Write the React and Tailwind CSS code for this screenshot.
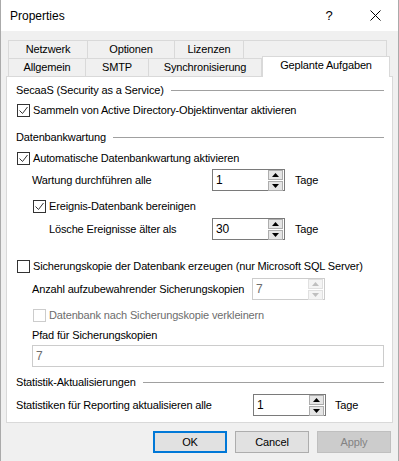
import React from 'react';

const font = { fontFamily: '"Liberation Sans", Arial, sans-serif' };

// Small checkbox in the Windows 10 style
const Check = ({ checked, disabled }) => (
  <span
    className={`flex h-[13px] w-[13px] shrink-0 items-center justify-center border bg-white ${
      disabled ? 'border-[#cccccc]' : 'border-[#333333]'
    }`}
  >
    {checked && (
      <svg width="11" height="11" viewBox="0 0 11 11" fill="none">
        <path d="M1.5 5.5l3 3 5-6.5" stroke="#333333" strokeWidth="1" />
      </svg>
    )}
  </span>
);

const GroupHeader = ({ title, className = '' }) => (
  <div className={`flex h-5 items-center pr-[8px] ${className}`}>
    <span className="whitespace-nowrap">{title}</span>
    <span className="ml-[7px] h-px flex-1 bg-[#a0a0a0]" />
  </div>
);

const SpinArrow = ({ up, disabled }) => (
  <span
    className={`flex h-[10px] w-[15px] items-center justify-center border ${
      disabled ? 'border-[#e0e0e0] bg-[#f4f4f4]' : 'border-[#adadad] bg-[#e5e5e5]'
    }`}
  >
    <svg width="7" height="4" viewBox="0 0 7 4">
      <path d={up ? 'M0 4L3.5 0L7 4z' : 'M0 0L3.5 4L7 0z'} fill={disabled ? '#bfbfbf' : '#000000'} />
    </svg>
  </span>
);

const Spin = ({ value, disabled, className = '' }) => (
  <div
    className={`flex h-[22px] w-[73px] shrink-0 items-center border bg-white ${
      disabled ? 'border-[#cccccc] text-[#6d6d6d]' : 'border-[#7a7a7a] text-black'
    } ${className}`}
  >
    <span className="flex-1 pl-[3px] text-[12px]">{value}</span>
    <span className="mr-[1px] flex flex-col gap-px">
      <SpinArrow up disabled={disabled} />
      <SpinArrow disabled={disabled} />
    </span>
  </div>
);

const Tab = ({ label, className = '' }) => (
  <div
    className={`flex items-center justify-center border border-b-0 border-[#d9d9d9] bg-[#f0f0f0] ${className}`}
  >
    {label}
  </div>
);

export default function App() {
  return (
    <div
      className="h-[461px] w-[399px] overflow-hidden whitespace-nowrap border-x border-[#aaaaaa] bg-[#f0f0f0] text-[11px] leading-none tracking-[-0.15px] text-black"
      style={font}
    >
      {/* Title bar */}
      <div className="flex h-[31px] items-center bg-white pl-[9px] text-[12px] tracking-normal">
        <span className="flex-1">Properties</span>
        <span className="w-[46px] text-center text-[13px]">?</span>
        <span className="flex w-[46px] items-center justify-center">
          <svg width="11" height="11" viewBox="0 0 11 11">
            <path d="M0.5 0.5l10 10M10.5 0.5l-10 10" stroke="#000" strokeWidth="1" />
          </svg>
        </span>
      </div>

      {/* Tabs */}
      <div className="relative mt-[9px] pl-[7px]">
        <div className="flex h-[18px]">
          <Tab label="Netzwerk" className="w-[80px]" />
          <Tab label="Optionen" className="w-[87px] border-l-0" />
          <Tab label="Lizenzen" className="w-[69px] border-l-0" />
          <Tab label="" className="w-[143px] border-l-0" />
        </div>
        <div className="flex h-[18px]">
          <Tab label="Allgemein" className="w-[78px]" />
          <Tab label="SMTP" className="w-[63px] border-l-0" />
          <Tab label="Synchronisierung" className="w-[113px] border-l-0" />
          <div className="relative z-10 -mt-[2px] flex h-[21px] w-[128px] items-center justify-center border border-b-0 border-[#d9d9d9] bg-white pb-[3px]">
            Geplante Aufgaben
          </div>
        </div>
      </div>

      {/* Tab panel */}
      <div className="mx-[5px] flex h-[347px] flex-col border border-[#d9d9d9] bg-white pl-[9px] pt-[3px]">
        <GroupHeader title="SecaaS (Security as a Service)" />
        <label className="flex h-5 items-center gap-[3px] pl-px">
          <Check checked />
          <span>Sammeln von Active Directory-Objektinventar aktivieren</span>
        </label>

        <GroupHeader title="Datenbankwartung" className="mt-[7px]" />
        <label className="mt-px flex h-5 items-center gap-[3px] pl-px">
          <Check checked />
          <span>Automatische Datenbankwartung aktivieren</span>
        </label>
        <div className="mt-px flex h-[22px] items-center pl-[16px]">
          <span className="w-[180px]">Wartung durchführen alle</span>
          <Spin value="1" />
          <span className="ml-[10px]">Tage</span>
        </div>
        <label className="mt-[5px] flex h-5 items-center gap-[3px] pl-[17px]">
          <Check checked />
          <span>Ereignis-Datenbank bereinigen</span>
        </label>
        <div className="mt-[2px] flex h-[22px] items-center pl-[33px]">
          <span className="w-[163px]">Lösche Ereignisse älter als</span>
          <Spin value="30" />
          <span className="ml-[10px]">Tage</span>
        </div>

        <label className="mt-[16px] flex h-5 items-center gap-[3px] pl-px">
          <Check />
          <span>Sicherungskopie der Datenbank erzeugen (nur Microsoft SQL Server)</span>
        </label>
        <div className="mt-[2px] flex h-[22px] items-center pl-[16px]">
          <span className="w-[220px]">Anzahl aufzubewahrender Sicherungskopien</span>
          <Spin value="7" disabled />
        </div>
        <label className="mt-[5px] flex h-5 items-center gap-[3px] pl-[17px] text-[#6d6d6d]">
          <Check disabled />
          <span>Datenbank nach Sicherungskopie verkleinern</span>
        </label>
        <div className="mt-px flex h-[18px] items-center pl-[16px]">Pfad für Sicherungskopien</div>
        <div className="ml-[16px] mr-[8px] mt-px flex h-[22px] items-center border border-[#cccccc] pl-[3px] text-[12px] text-[#6d6d6d]">
          7
        </div>

        <GroupHeader title="Statistik-Aktualisierungen" className="mt-[5px]" />
        <div className="mt-[2px] flex h-[22px] items-center">
          <span className="w-[237px]">Statistiken für Reporting aktualisieren alle</span>
          <Spin value="1" />
          <span className="ml-[9px]">Tage</span>
        </div>
      </div>

      {/* Buttons */}
      <div className="mt-[8px] flex justify-end gap-[8px] pr-[7px]">
        <button className="h-[22px] w-[74px] border-2 border-[#0078d7] bg-[#e1e1e1]">OK</button>
        <button className="h-[22px] w-[74px] border border-[#adadad] bg-[#e1e1e1]">Cancel</button>
        <button className="h-[22px] w-[74px] border border-[#bfbfbf] bg-[#cccccc] text-[#838383]">Apply</button>
      </div>
    </div>
  );
}
